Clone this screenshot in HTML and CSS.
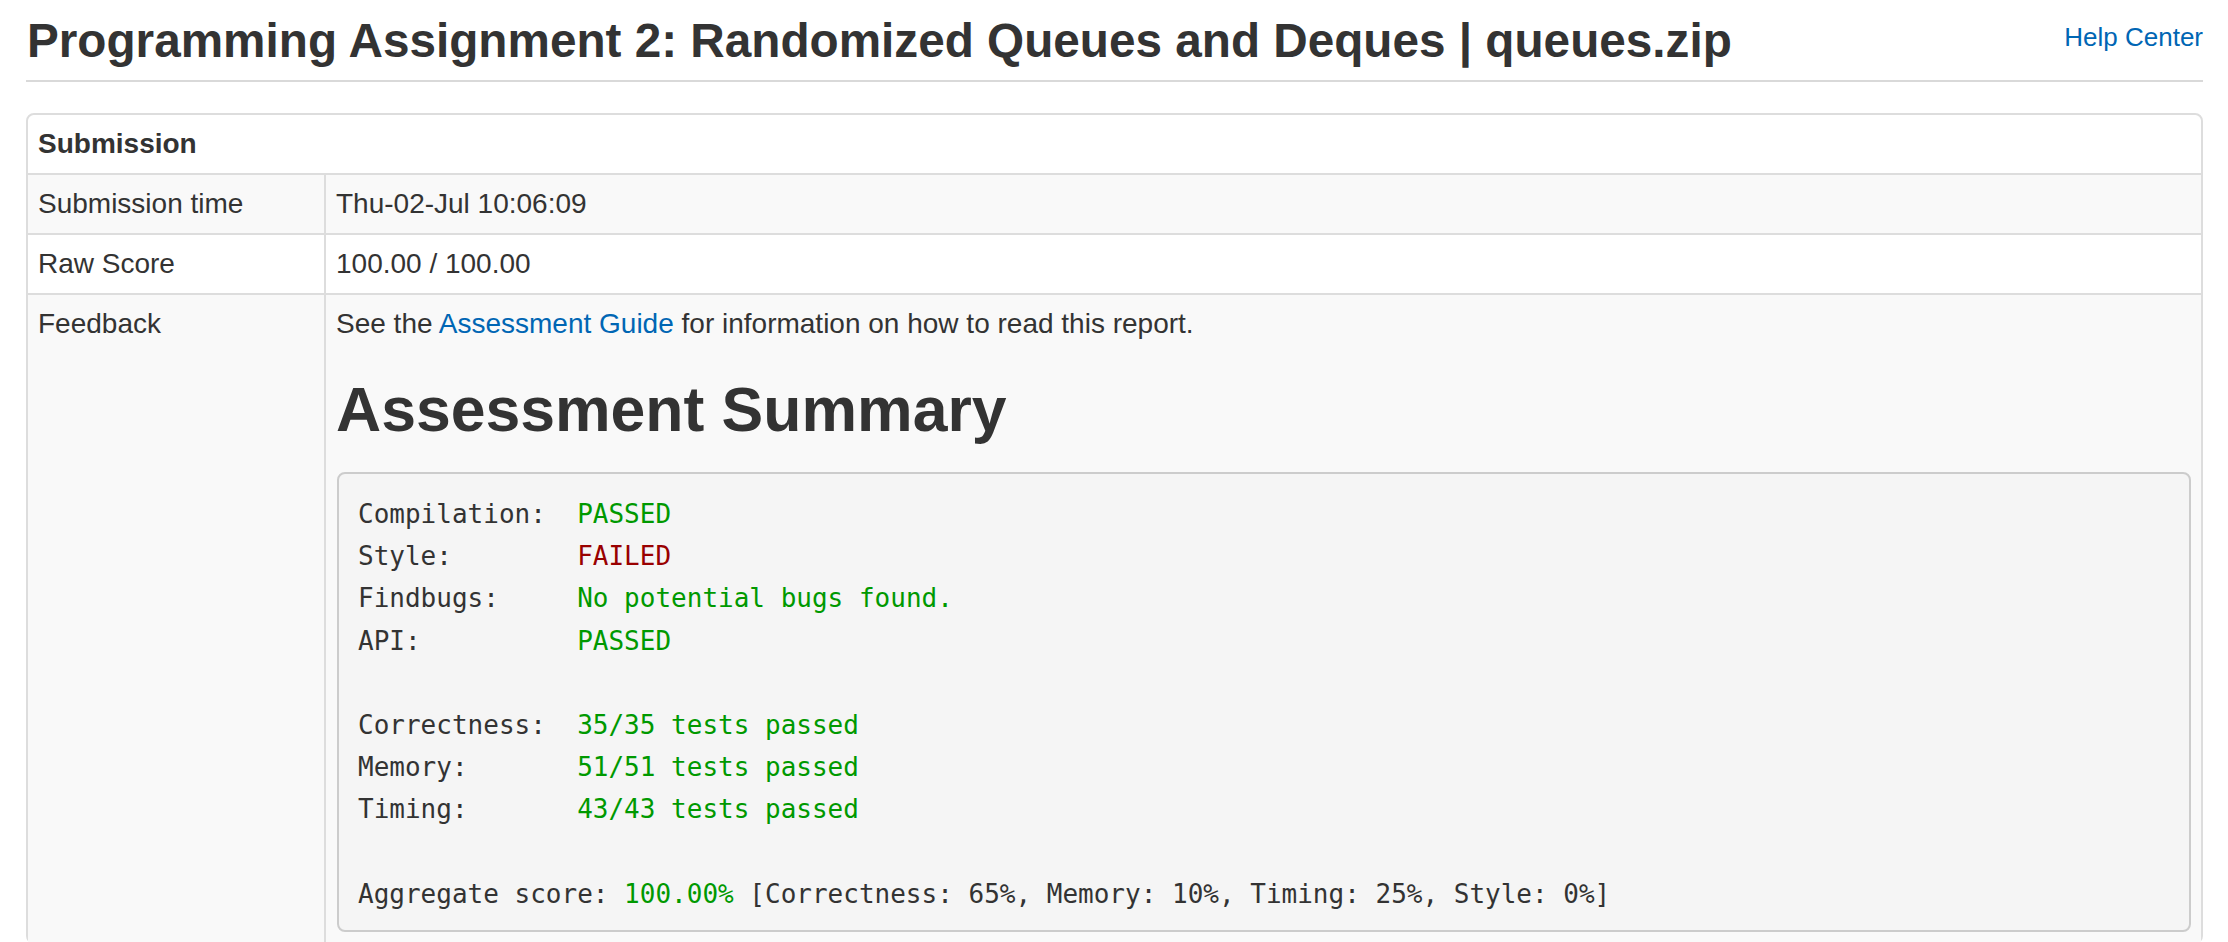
FILE: index.html
```html
<!DOCTYPE html>
<html lang="en">
<head>
<meta charset="utf-8">
<title>Programming Assignment 2: Randomized Queues and Deques | queues.zip</title>
<link rel="stylesheet" href="styles.css">
</head>
<body>
<div class="page">
  <header class="page-header">
    <h1 class="title">Programming Assignment 2: Randomized Queues and Deques | queues.zip</h1>
    <a class="help" href="#">Help Center</a>
  </header>
  <table class="sub">
    <thead>
      <tr><th colspan="2">Submission</th></tr>
    </thead>
    <tbody>
      <tr class="odd"><td class="label">Submission time</td><td class="value">Thu-02-Jul 10:06:09</td></tr>
      <tr><td class="label">Raw Score</td><td class="value">100.00 / 100.00</td></tr>
      <tr class="odd">
        <td class="label">Feedback</td>
        <td class="value">
          <p class="guide">See the <a href="#">Assessment Guide</a> for information on how to read this report.</p>
          <h2 class="summary">Assessment Summary</h2>
<pre class="report">Compilation:  <span class="ok">PASSED</span>
Style:        <span class="bad">FAILED</span>
Findbugs:     <span class="ok">No potential bugs found.</span>
API:          <span class="ok">PASSED</span>

Correctness:  <span class="ok">35/35 tests passed</span>
Memory:       <span class="ok">51/51 tests passed</span>
Timing:       <span class="ok">43/43 tests passed</span>

Aggregate score: <span class="ok">100.00%</span> [Correctness: 65%, Memory: 10%, Timing: 25%, Style: 0%]</pre>
        </td>
      </tr>
    </tbody>
  </table>
</div>
</body>
</html>
```
FILE: styles.css
```css
html, body {
  margin: 0;
  padding: 0;
  background: #fff;
}
body {
  font-family: "Liberation Sans", Arial, Helvetica, sans-serif;
  font-size: 28px;
  color: #333;
}
.page {
  padding: 14px 25px 0 26px;
}
.page-header {
  display: flex;
  justify-content: space-between;
  align-items: flex-start;
  padding-bottom: 13px;
  border-bottom: 2px solid #d9d9d9;
}
.title {
  margin: 0 0 0 1px;
  font-size: 47.7px;
  line-height: 53px;
  font-weight: bold;
  color: #333;
}
.help {
  margin-top: 5px;
  font-size: 26px;
  line-height: 36px;
  color: #0066b4;
  text-decoration: none;
}
.sub {
  margin-top: 31px;
  width: 100%;
  border: 2px solid #ddd;
  border-radius: 8px;
  border-collapse: separate;
  border-spacing: 0;
}
.sub th,
.sub td {
  padding: 10px;
  line-height: 38px;
  text-align: left;
  vertical-align: top;
}
.sub th {
  font-weight: bold;
  background: #fff;
  border-radius: 8px 8px 0 0;
}
.sub tbody td {
  border-top: 2px solid #ddd;
}
.sub td.value {
  border-left: 2px solid #ddd;
}
.sub td.label {
  width: 276px;
}
.sub tr.odd td {
  background: #f9f9f9;
}
.guide {
  margin: 0;
}
.guide a {
  color: #0066b4;
  text-decoration: none;
}
.summary {
  margin: 33px 0 29px;
  font-size: 62.5px;
  line-height: 67px;
  font-weight: bold;
  color: #333;
}
.report {
  margin: 0 0 0 1px;
  padding: 19px 19px 15px;
  border: 2px solid #ccc;
  border-radius: 8px;
  background: #f5f5f5;
  font-family: "DejaVu Sans Mono", "Liberation Mono", monospace;
  font-size: 26px;
  line-height: 42.2px;
  color: #333;
  white-space: pre;
}
.ok {
  color: #009900;
}
.bad {
  color: #990000;
}
```
